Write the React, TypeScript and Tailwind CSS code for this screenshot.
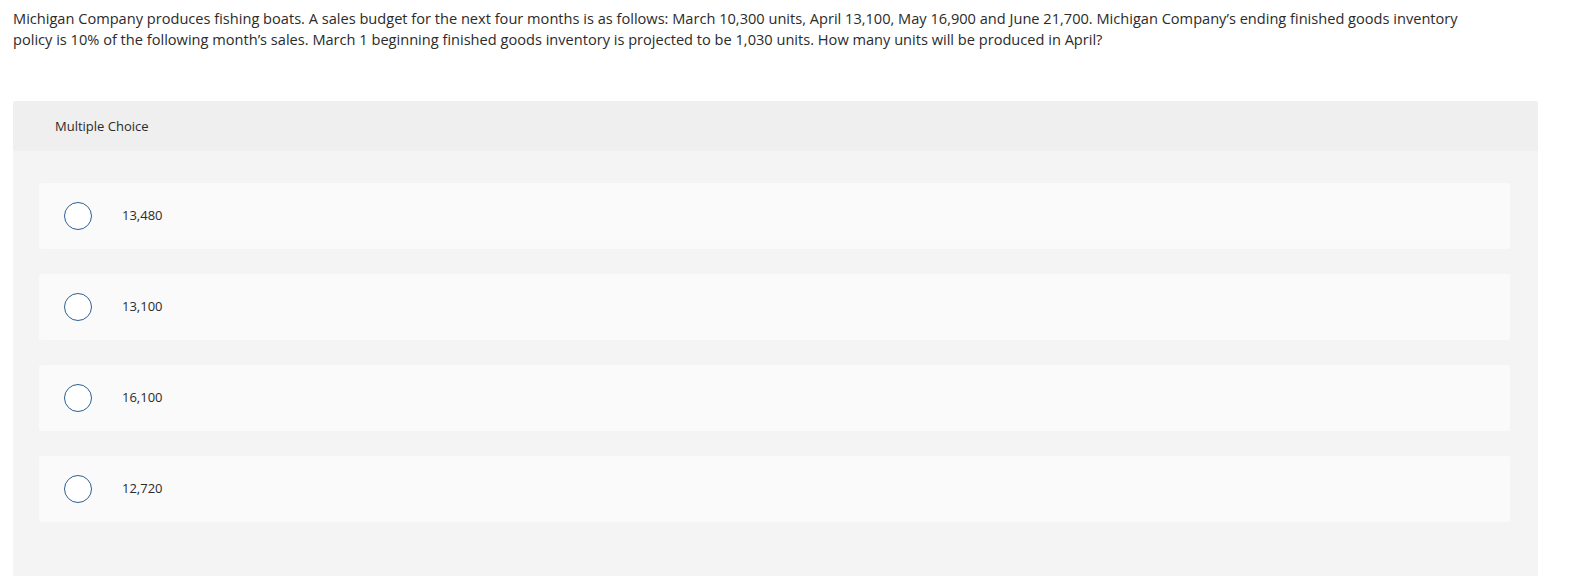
import React from "react";

const options = ["13,480", "13,100", "16,100", "12,720"];

export default function App() {
  return (
    <div className="min-h-[585px] bg-white" style={{ fontFamily: '"Open Sans", "Liberation Sans", sans-serif' }}>
      <div className="px-[13px] pt-[8px] text-[14.6px] leading-[21px] text-[#2b2b2b] whitespace-nowrap">
        Michigan Company produces fishing boats. A sales budget for the next four months is as follows: March 10,300 units, April 13,100, May 16,900 and June 21,700. Michigan Company’s ending finished goods inventory
        <br />
        policy is 10% of the following month’s sales. March 1 beginning finished goods inventory is projected to be 1,030 units. How many units will be produced in April?
      </div>
      <div className="ml-[13px] mt-[51px] w-[1525px] h-[475px] rounded-t-[3px] bg-[#f4f4f4]">
        <div className="h-[50px] flex items-center pl-[42px] pt-[1px] bg-[#efefef] rounded-t-[3px] text-[13px] text-[#2b2b2b]">
          Multiple Choice
        </div>
        <div className="pl-[26px] pr-[28px] pt-[32px] flex flex-col gap-[25px]">
          {options.map((o) => (
            <div key={o} className="h-[66px] rounded-[3px] bg-[#fafafa] flex items-center">
              <div className="ml-[25px] w-[28px] h-[28px] rounded-full border-[1.5px] border-[#2d5f8f] bg-white" />
              <span className="ml-[30px] text-[13px] text-[#2b2b2b]">{o}</span>
            </div>
          ))}
        </div>
      </div>
    </div>
  );
}
